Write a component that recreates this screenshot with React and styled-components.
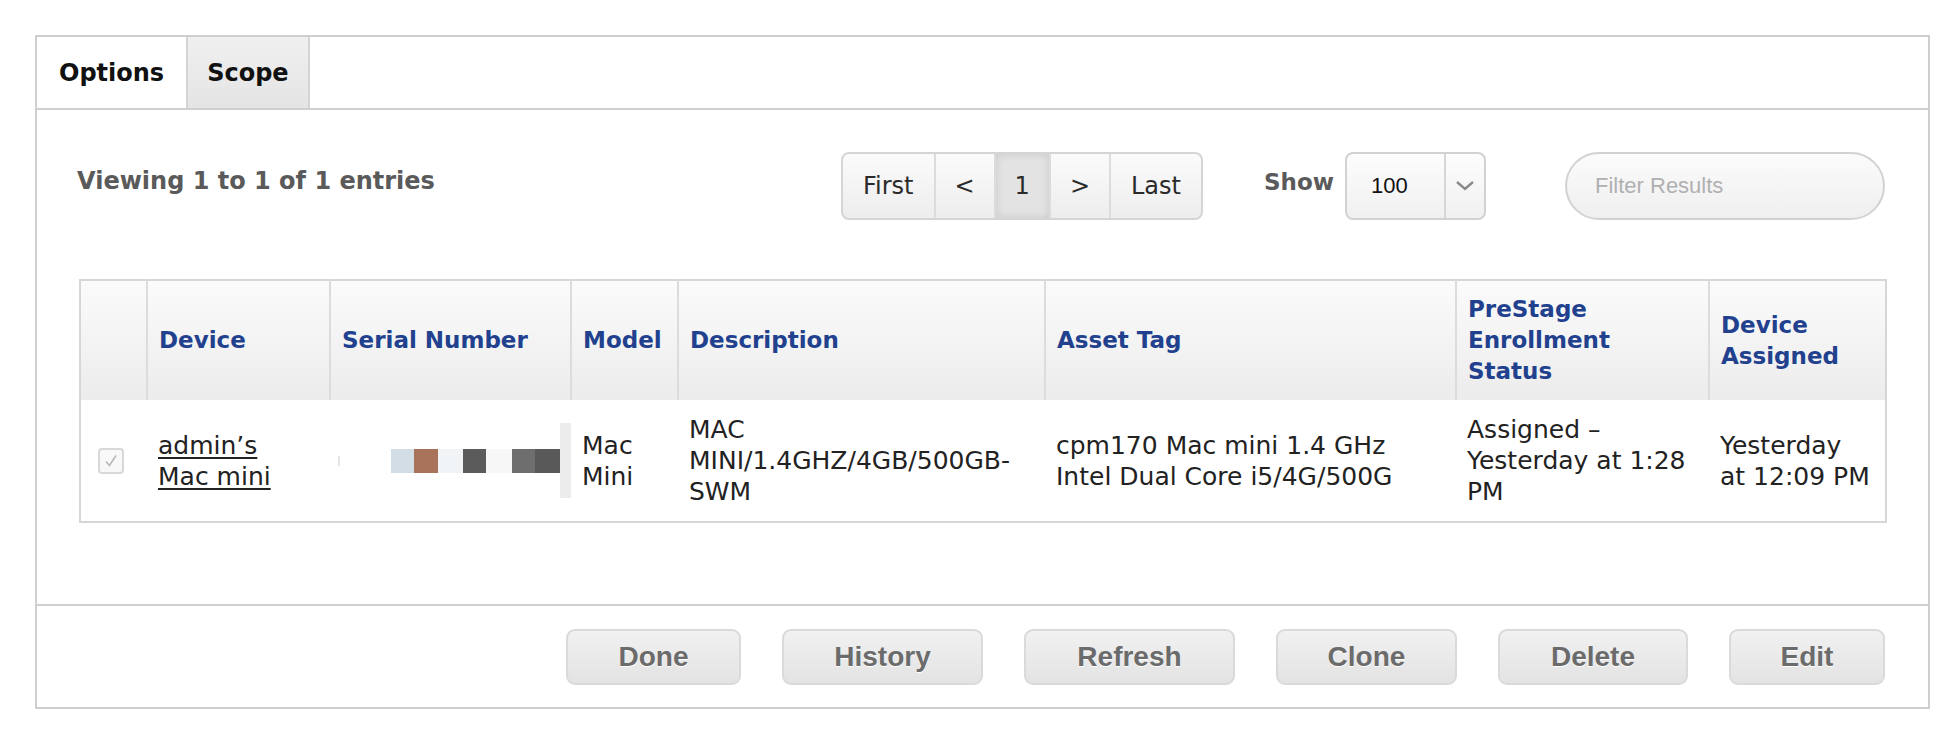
import React from "react";
import styled, { createGlobalStyle } from "styled-components";

const GlobalStyle = createGlobalStyle`
  html, body {
    margin: 0;
    padding: 0;
    background: #fff;
  }
  body {
    font-family: "DejaVu Sans", "Liberation Sans", sans-serif;
    color: #222;
  }
`;

const Page = styled.div`
  padding: 35px 26px 21px 35px;
`;

const Panel = styled.div`
  box-sizing: border-box;
  width: 1895px;
  height: 674px;
  border: 2px solid #cfcfcf;
  display: flex;
  flex-direction: column;
  background: #fff;
`;

const TabBar = styled.div`
  display: flex;
  height: 71px;
  border-bottom: 2px solid #cfcfcf;
`;

const Tab = styled.div`
  display: flex;
  align-items: center;
  padding: 0 ${({ pad }) => pad}px;
  font-size: 24px;
  font-weight: bold;
  color: #111;
  border-right: 2px solid #d4d4d4;
  background: ${({ active }) =>
    active ? "#fff" : "linear-gradient(#f0f0f0, #e4e4e4)"};
`;

const Main = styled.div`
  flex: 1;
  padding: 42px 43px 0 42px;
`;

const Toolbar = styled.div`
  display: flex;
  align-items: center;
  height: 68px;
`;

const Viewing = styled.div`
  font-size: 24px;
  font-weight: bold;
  color: #5a5a5a;
  margin-left: -2px;
  margin-top: -11px;
`;

const Controls = styled.div`
  margin-left: auto;
  display: flex;
  align-items: center;
`;

const Pager = styled.div`
  display: flex;
  height: 68px;
  box-sizing: border-box;
  border: 2px solid #d5d5d5;
  border-radius: 8px;
  overflow: hidden;
  background: linear-gradient(#fbfbfb, #ededed);
`;

const PageButton = styled.div`
  display: flex;
  align-items: center;
  padding: 0 ${({ wide }) => (wide ? 20 : 19)}px;
  font-size: 24px;
  color: #2a2a2a;
  & + & {
    border-left: 2px solid #dcdcdc;
  }
  ${({ current }) =>
    current &&
    `
    background: #e3e3e3;
    box-shadow: inset 0 0 8px rgba(0,0,0,0.12);
  `}
`;

const ShowLabel = styled.span`
  margin-left: 61px;
  margin-top: -8px;
  font-size: 23px;
  font-weight: bold;
  color: #5a5a5a;
`;

const Select = styled.div`
  margin-left: 11px;
  width: 141px;
  height: 68px;
  box-sizing: border-box;
  border: 2px solid #d2d2d2;
  border-radius: 8px;
  display: flex;
  background: linear-gradient(#fdfdfd, #f0f0f0);
`;

const SelectValue = styled.div`
  flex: 1;
  display: flex;
  align-items: center;
  padding-left: 24px;
  font-family: "Liberation Sans", Arial, sans-serif;
  font-size: 22px;
  color: #111;
`;

const SelectArrow = styled.div`
  width: 38px;
  border-left: 2px solid #d6d6d6;
  display: flex;
  align-items: center;
  justify-content: center;
`;

const Filter = styled.input`
  margin-left: 79px;
  width: 320px;
  height: 68px;
  box-sizing: border-box;
  border: 2px solid #d2d2d2;
  border-radius: 34px;
  padding: 0 28px;
  background: linear-gradient(#fbfbfb, #efefef);
  font-family: "Liberation Sans", Arial, sans-serif;
  font-size: 22px;
  outline: none;
  &::placeholder {
    color: #b0b0b0;
  }
`;

const Table = styled.table`
  margin-top: 59px;
  width: 1806px;
  border-collapse: collapse;
  table-layout: fixed;
  border: 2px solid #d6d6d6;
`;

const HeadCell = styled.th`
  height: 119px;
  padding: 0 12px 0 11px;
  text-align: left;
  vertical-align: middle;
  font-size: 23px;
  font-weight: bold;
  line-height: 31px;
  color: #21418f;
  background: linear-gradient(#fbfbfb, #ececec);
  border-left: 2px solid #dcdcdc;
  &:first-child {
    border-left: none;
  }
`;

const Cell = styled.td`
  height: 121px;
  padding: 0 ${({ padRight }) => padRight ?? 12}px 0 ${({ padLeft }) => padLeft ?? 11}px;
  vertical-align: middle;
  font-size: 25px;
  line-height: 31px;
  color: #222;
  background: #fff;
`;

const CheckBox = styled.span`
  display: flex;
  align-items: center;
  justify-content: center;
  width: 26px;
  height: 26px;
  margin: 0 auto;
  box-sizing: border-box;
  border: 2px solid #d8d8d8;
  border-radius: 4px;
  background: #f8f8f8;
`;

const DeviceLink = styled.a`
  color: #222;
  text-decoration: underline;
  text-underline-offset: 3px;
`;

const Redacted = styled.div`
  display: flex;
  align-items: center;
  height: 121px;
`;

const Pixel = styled.span`
  width: ${({ w }) => w}px;
  height: ${({ h }) => h ?? 24}px;
  background: ${({ c }) => c};
  margin-left: ${({ gap }) => gap ?? 0}px;
`;

const Footer = styled.div`
  height: 101px;
  border-top: 2px solid #cfcfcf;
  display: flex;
  align-items: center;
  justify-content: flex-end;
  gap: 41px;
  padding-right: 43px;
`;

const ActionButton = styled.div`
  height: 56px;
  box-sizing: border-box;
  display: flex;
  align-items: center;
  justify-content: center;
  min-width: ${({ w }) => w}px;
  border: 2px solid #dadada;
  border-radius: 9px;
  background: linear-gradient(#f1f1f1, #e3e3e3);
  font-family: "Liberation Sans", Arial, sans-serif;
  font-size: 28px;
  font-weight: bold;
  color: #6b6b6b;
  text-shadow: 0 1px 0 #fff;
`;

const columns = [
  { key: "check", width: 67, label: "" },
  { key: "device", width: 183, label: "Device" },
  { key: "serial", width: 241, label: "Serial Number" },
  { key: "model", width: 107, label: "Model" },
  { key: "desc", width: 367, label: "Description" },
  { key: "asset", width: 411, label: "Asset Tag" },
  { key: "status", width: 253, label: "PreStage Enrollment Status" },
  { key: "assigned", width: 177, label: "Device Assigned" },
];

const serialPixels = [
  { w: 2, h: 10, c: "#e6e6e6", gap: 8 },
  { w: 23, c: "#d3dde6", gap: 51 },
  { w: 24, c: "#a8735a" },
  { w: 25, c: "#f1f4f7" },
  { w: 23, c: "#5b5b5b" },
  { w: 26, c: "#f7f7f7" },
  { w: 23, c: "#6e6e6e" },
  { w: 25, c: "#595959" },
  { w: 11, h: 75, c: "#ececec" },
];

const actions = [
  { label: "Done", w: 175 },
  { label: "History", w: 201 },
  { label: "Refresh", w: 211 },
  { label: "Clone", w: 181 },
  { label: "Delete", w: 190 },
  { label: "Edit", w: 156 },
];

const Chevron = () => (
  <svg width="20" height="12" viewBox="0 0 20 12">
    <polyline points="2,2 10,9 18,2" fill="none" stroke="#8a8a8a" strokeWidth="2.4" />
  </svg>
);

const Check = () => (
  <svg width="16" height="16" viewBox="0 0 16 16">
    <polyline points="3,8.5 6.5,12.5 13,2.5" fill="none" stroke="#b8b8b8" strokeWidth="1.6" />
  </svg>
);

export default function App() {
  return (
    <Page>
      <GlobalStyle />
      <Panel>
        <TabBar>
          <Tab active pad={22}>Options</Tab>
          <Tab pad={19}>Scope</Tab>
        </TabBar>
        <Main>
          <Toolbar>
            <Viewing>Viewing 1 to 1 of 1 entries</Viewing>
            <Controls>
              <Pager>
                <PageButton wide>First</PageButton>
                <PageButton>&lt;</PageButton>
                <PageButton current>1</PageButton>
                <PageButton>&gt;</PageButton>
                <PageButton wide>Last</PageButton>
              </Pager>
              <ShowLabel>Show</ShowLabel>
              <Select>
                <SelectValue>100</SelectValue>
                <SelectArrow>
                  <Chevron />
                </SelectArrow>
              </Select>
              <Filter placeholder="Filter Results" />
            </Controls>
          </Toolbar>
          <Table>
            <colgroup>
              {columns.map((c) => (
                <col key={c.key} style={{ width: c.width }} />
              ))}
            </colgroup>
            <thead>
              <tr>
                {columns.map((c) => (
                  <HeadCell key={c.key}>{c.label}</HeadCell>
                ))}
              </tr>
            </thead>
            <tbody>
              <tr>
                <Cell padLeft={0} padRight={6}>
                  <CheckBox>
                    <Check />
                  </CheckBox>
                </Cell>
                <Cell padRight={28}>
                  <DeviceLink href="#">admin’s Mac mini</DeviceLink>
                </Cell>
                <Cell padLeft={0} padRight={0}>
                  <Redacted>
                    {serialPixels.map((p, i) => (
                      <Pixel key={i} {...p} />
                    ))}
                  </Redacted>
                </Cell>
                <Cell>Mac Mini</Cell>
                <Cell>MAC MINI/1.4GHZ/4GB/500GB-SWM</Cell>
                <Cell>cpm170 Mac mini 1.4 GHz Intel Dual Core i5/4G/500G</Cell>
                <Cell>Assigned – Yesterday at 1:28 PM</Cell>
                <Cell>Yesterday at 12:09 PM</Cell>
              </tr>
            </tbody>
          </Table>
        </Main>
        <Footer>
          {actions.map((a) => (
            <ActionButton key={a.label} w={a.w}>
              {a.label}
            </ActionButton>
          ))}
        </Footer>
      </Panel>
    </Page>
  );
}
